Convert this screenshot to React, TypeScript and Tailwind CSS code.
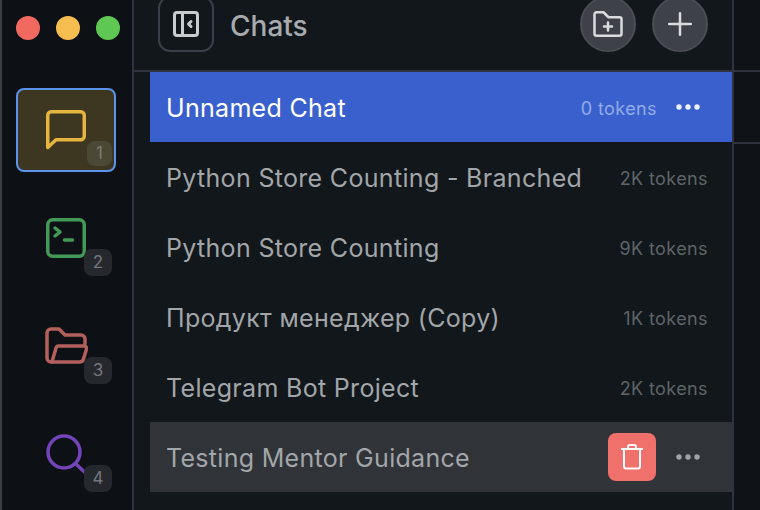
import { ReactNode } from 'react'

const chats = [
  { name: 'Python Store Counting - Branched', tokens: '2K tokens' },
  { name: 'Python Store Counting', tokens: '9K tokens' },
  { name: 'Продукт менеджер (Copy)', tokens: '1K tokens' },
  { name: 'Telegram Bot Project', tokens: '2K tokens' },
]

function NavItem({ n, active, children }: { n: number; active?: boolean; children: ReactNode }) {
  return (
    <div
      className={
        active
          ? 'relative flex h-[84px] w-[100px] items-center justify-center rounded-lg border-2 border-[#5b93ea] bg-[#3d3722]'
          : 'relative flex h-[84px] w-[100px] items-center justify-center rounded-lg'
      }
    >
      {children}
      <span
        className={
          active
            ? 'absolute right-[2px] bottom-[4px] flex h-[25px] w-[25px] items-center justify-center rounded-lg bg-[#4c4836] text-[17px] text-[#7d7a6c]'
            : 'absolute right-[4px] bottom-[4px] flex h-[27px] w-[28px] items-center justify-center rounded-lg bg-[#25282c] text-[17px] text-[#73777c]'
        }
      >
        {n}
      </span>
    </div>
  )
}

function Dots({ color }: { color: string }) {
  return (
    <svg width="24" height="6" viewBox="0 0 24 6" fill={color}>
      <circle cx="3" cy="3" r="2.7" />
      <circle cx="12" cy="3" r="2.7" />
      <circle cx="21" cy="3" r="2.7" />
    </svg>
  )
}

export default function App() {
  return (
    <div className="flex h-[510px] w-[760px] overflow-hidden bg-[#0f1318] font-['Inter',sans-serif]">
      <aside className="flex w-[134px] shrink-0 flex-col border-r-2 border-l-2 border-r-[#30323f] border-l-[#3a3d44] bg-[#0d1116] pl-[14px]">
        <div className="flex h-[88px] items-start gap-4 pt-4">
          <span className="h-6 w-6 rounded-full bg-[#f1695f]" />
          <span className="h-6 w-6 rounded-full bg-[#f6bd4f]" />
          <span className="h-6 w-6 rounded-full bg-[#5fc854]" />
        </div>
        <div className="flex flex-col gap-6">
          <NavItem n={1} active>
            <svg width="44" height="44" viewBox="0 0 44 44" fill="none" stroke="#e5b53f" strokeWidth="3.500" strokeLinejoin="round">
              <path d="M3.750 39.500V7.250a3.500 3.500 0 0 1 3.500-3.500h29.500a3.500 3.500 0 0 1 3.500 3.500v21a3.500 3.500 0 0 1-3.500 3.500H12z" />
            </svg>
          </NavItem>
          <NavItem n={2}>
            <svg width="44" height="44" viewBox="0 0 44 44" fill="none" stroke="#439a56" strokeWidth="3.500" strokeLinecap="round" strokeLinejoin="round">
              <rect x="3.750" y="3.750" width="36.500" height="36.500" rx="5" />
              <path d="M11 12l5 4-5 4" />
              <path d="M20.500 24h8" />
            </svg>
          </NavItem>
          <NavItem n={3}>
            <svg width="44" height="44" viewBox="0 0 44 44" fill="none" stroke="#b3605c" strokeWidth="3.500" strokeLinecap="round" strokeLinejoin="round">
              <path d="M8 38H7a4 4 0 0 1-4-4V9a4 4 0 0 1 4-4h8l6 6h16a4 4 0 0 1 4 4v5" />
              <path d="M8 38l4-14a3 3 0 0 1 3-2h25a2.500 2.500 0 0 1 2.500 3l-3 10a4 4 0 0 1-4 3z" />
            </svg>
          </NavItem>
          <NavItem n={4}>
            <svg width="44" height="44" viewBox="0 0 44 44" fill="none" stroke="#7443b8" strokeWidth="3.500" strokeLinecap="round">
              <circle cx="20" cy="20" r="16" />
              <path d="M32 32l9 8.500" />
            </svg>
          </NavItem>
        </div>
      </aside>

      <main className="flex w-[600px] shrink-0 flex-col border-r-2 border-[#30323f] bg-[#12171b]">
        <header className="flex h-[72px] shrink-0 items-center border-b-2 border-[#30323f] pr-6 pb-[22px] pl-6">
          <button className="flex h-14 w-14 shrink-0 items-center justify-center rounded-xl border-2 border-[#3c3f4a]">
            <svg width="28" height="28" viewBox="0 0 28 28" fill="none" stroke="#c9cccf" strokeWidth="3" strokeLinecap="round" strokeLinejoin="round">
              <rect x="2.500" y="2.500" width="23" height="23" rx="2.500" />
              <path d="M10.500 2.500v23" />
              <path d="M19 11.500l-2.500 2.500 2.500 2.500" />
            </svg>
          </button>
          <h1 className="mt-1 ml-4 text-[28px] leading-none font-medium text-[#a7abae]">Chats</h1>
          <button className="ml-auto flex h-14 w-14 items-center justify-center rounded-full border-2 border-[#4a4e54] bg-[#3e4248]">
            <svg width="30" height="28" viewBox="0 0 30 28" fill="none" stroke="#d9dbdd" strokeWidth="2.500" strokeLinecap="round" strokeLinejoin="round">
              <path d="M3.500 25.750a2 2 0 0 1-2-2v-19.500a2 2 0 0 1 2-2h7l5 5h11a2 2 0 0 1 2 2v14.500a2 2 0 0 1-2 2z" />
              <path d="M15 12.500v8M11 16.500h8" />
            </svg>
          </button>
          <button className="ml-4 flex h-14 w-14 items-center justify-center rounded-full border-2 border-[#4a4e54] bg-[#3e4248]">
            <svg width="26" height="26" viewBox="0 0 26 26" fill="none" stroke="#d9dbdd" strokeWidth="2.500" strokeLinecap="round">
              <path d="M13 2.250v21.500M2.250 13h21.500" />
            </svg>
          </button>
        </header>

        <ul className="pl-4">
          <li className="flex h-[70px] items-center bg-[#3a60cd] pr-[32px] pl-4">
            <span className="mt-1 text-[25px] tracking-[0.3px] text-white">Unnamed Chat</span>
            <span className="mt-[2px] ml-auto text-[18px] tracking-[0.4px] text-[#92ade8]">0 tokens</span>
            <span className="ml-[19px] flex"><Dots color="#eef2fb" /></span>
          </li>
          {chats.map((chat) => (
            <li key={chat.name} className="flex h-[70px] items-center pr-6 pl-4">
              <span className="mt-1 text-[25px] tracking-[0.32px] text-[#a2a6a9]">{chat.name}</span>
              <span className="mt-[2px] ml-auto text-[18px] tracking-[0.4px] text-[#5f6468]">{chat.tokens}</span>
            </li>
          ))}
          <li className="flex h-[70px] items-center bg-[#303337] pr-[32px] pl-4">
            <span className="mt-1 text-[25px] tracking-[0.3px] text-[#a2a6a9]">Testing Mentor Guidance</span>
            <button className="ml-auto flex h-12 w-12 items-center justify-center rounded-lg bg-[#f0706c]">
              <svg width="24" height="28" viewBox="0 0 24 28" fill="none" stroke="#ffffff" strokeWidth="2" strokeLinejoin="round">
                <path d="M1 6h22" />
                <path d="M4 6v17.500a2 2 0 0 0 2 2h12a2 2 0 0 0 2-2V6" />
                <path d="M8 6V4a2 2 0 0 1 2-2h4a2 2 0 0 1 2 2v2" />
              </svg>
            </button>
            <span className="ml-[20px] flex"><Dots color="#a0a3a6" /></span>
          </li>
        </ul>
      </main>

      <div className="flex-1">
        <div className="h-[72px] border-b-2 border-[#30323f]" />
        <div className="h-[72px] border-b-2 border-[#30323f]" />
      </div>
    </div>
  )
}
